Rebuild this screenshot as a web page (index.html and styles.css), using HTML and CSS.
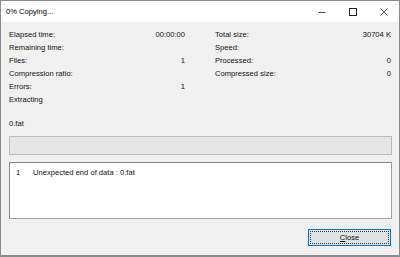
FILE: index.html
```html
<!DOCTYPE html>
<html>
<head>
    <title>0% Copying...</title>
    <link rel="stylesheet" href="styles.css">
</head>
<body>
    <div class="window">
        <div class="titlebar">
            <span class="title">0% Copying...</span>
            <div class="caption-buttons">
                <span class="cap-btn">
                    <svg width="8" height="8" viewBox="0 0 8 8"><path d="M0.5 4.5H7.5" stroke="#444" stroke-width="1"/></svg>
                </span>
                <span class="cap-btn">
                    <svg width="8" height="8" viewBox="0 0 8 8"><rect x="0.5" y="0.5" width="7" height="7" fill="none" stroke="#222" stroke-width="1"/></svg>
                </span>
                <span class="cap-btn">
                    <svg width="8" height="8" viewBox="0 0 8 8"><path d="M0.5 0.5L7.5 7.5M7.5 0.5L0.5 7.5" stroke="#444" stroke-width="0.9"/></svg>
                </span>
            </div>
        </div>

        <div class="content">
            <div class="stats">
                <div class="col">
                    <div class="row"><span>Elapsed time:</span><span>00:00:00</span></div>
                    <div class="row"><span>Remaining time:</span><span></span></div>
                    <div class="row"><span>Files:</span><span>1</span></div>
                    <div class="row"><span>Compression ratio:</span><span></span></div>
                    <div class="row"><span>Errors:</span><span>1</span></div>
                    <div class="row"><span>Extracting</span><span></span></div>
                </div>
                <div class="col">
                    <div class="row"><span>Total size:</span><span>30704 K</span></div>
                    <div class="row"><span>Speed:</span><span></span></div>
                    <div class="row"><span>Processed:</span><span>0</span></div>
                    <div class="row"><span>Compressed size:</span><span>0</span></div>
                </div>
            </div>

            <div class="current-file">0.fat</div>

            <div class="progress"></div>

            <div class="log">
                <div class="log-item"><span class="log-num">1</span><span>Unexpected end of data : 0.fat</span></div>
            </div>

            <div class="footer">
                <button class="btn-close"><span class="focus"><u>C</u>lose</span></button>
            </div>
        </div>
    </div>
</body>
</html>
```

FILE: styles.css
```css
html, body {
    margin: 0;
    padding: 0;
}
body {
    font-family: "Liberation Sans", Arial, sans-serif;
    font-size: 7.6px;
    color: #111;
    background-color: #f0f0f0;
}
.window {
    width: 400px;
    height: 257px;
    box-sizing: border-box;
    border: 1px solid #8a8a8a;
    border-bottom-width: 2px;
    display: flex;
    flex-direction: column;
    background-color: #f0f0f0;
}
.titlebar {
    height: 21px;
    background-color: #fff;
    display: flex;
    align-items: center;
    flex-shrink: 0;
}
.title {
    padding-left: 5px;
    flex: 1;
    color: #000;
}
.caption-buttons {
    display: flex;
    height: 100%;
}
.cap-btn {
    width: 31px;
    height: 100%;
    display: flex;
    align-items: center;
    justify-content: center;
}
.cap-btn svg {
    display: block;
}
.content {
    flex: 1;
    padding: 6px 7px 0 8px;
    display: flex;
    flex-direction: column;
}
.stats {
    display: grid;
    grid-template-columns: 176px 176px;
    column-gap: 30px;
}
.row {
    height: 13px;
    line-height: 13px;
    display: flex;
    justify-content: space-between;
}
.current-file {
    margin-top: 11px;
    height: 13px;
    line-height: 13px;
}
.progress {
    margin-top: 6px;
    height: 19px;
    box-sizing: border-box;
    border: 1px solid #bcbcbc;
    background-color: #e6e6e6;
}
.log {
    margin-top: 7px;
    height: 57px;
    box-sizing: border-box;
    border: 1px solid #a0a0a0;
    border-top-color: #828282;
    border-left-color: #828282;
    background-color: #fff;
    padding: 3px 0 0 6px;
}
.log-item {
    display: flex;
    line-height: 13px;
}
.log-num {
    width: 17px;
}
.footer {
    display: flex;
    justify-content: flex-end;
    padding-top: 10px;
    padding-right: 1px;
}
.btn-close {
    width: 83px;
    height: 17px;
    padding: 1px;
    border: 1px solid #0078d7;
    background-color: #e1e1e1;
    font-family: inherit;
    font-size: inherit;
    color: #111;
    display: flex;
}
.focus {
    flex: 1;
    border: 1px dotted #333;
    display: flex;
    align-items: center;
    justify-content: center;
}
```
